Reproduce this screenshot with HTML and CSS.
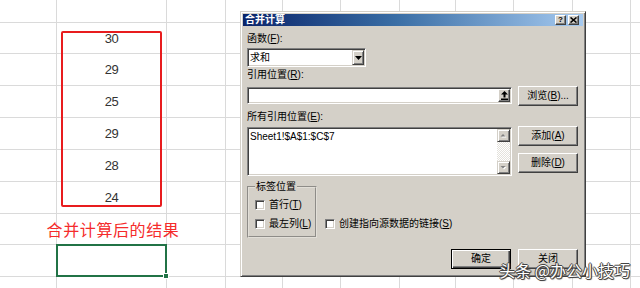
FILE: index.html
```html
<!DOCTYPE html>
<html lang="zh-CN">
<head>
<meta charset="utf-8">
<title>合并计算</title>
<link rel="stylesheet" href="styles.css">
</head>
<body>
<div class="sheet">
  <div></div><div></div><div></div><div></div><div></div><div></div><div></div><div></div><div></div><div></div><div></div>
  <div></div><div class="num">30</div><div></div><div></div><div></div><div></div><div></div><div></div><div></div><div></div><div></div>
  <div></div><div class="num">29</div><div></div><div></div><div></div><div></div><div></div><div></div><div></div><div></div><div></div>
  <div></div><div class="num">25</div><div></div><div></div><div></div><div></div><div></div><div></div><div></div><div></div><div></div>
  <div></div><div class="num">29</div><div></div><div></div><div></div><div></div><div></div><div></div><div></div><div></div><div></div>
  <div></div><div class="num">28</div><div></div><div></div><div></div><div></div><div></div><div></div><div></div><div></div><div></div>
  <div></div><div class="num">24</div><div></div><div></div><div></div><div></div><div></div><div></div><div></div><div></div><div></div>
  <div></div><div class="note">合并计算后的结果</div><div></div><div></div><div></div><div></div><div></div><div></div><div></div><div></div><div></div>
  <div></div><div class="sel"></div><div></div><div></div><div></div><div></div><div></div><div></div><div></div><div></div><div></div>
  <div></div><div></div><div></div><div></div><div></div><div></div><div></div><div></div><div></div><div></div><div></div>
</div>

<div class="redbox"></div>

<div class="dialog">
  <div class="title">
    <span>合并计算</span>
    <div class="tbtns">
      <span class="tb q">?</span>
      <span class="tb"><svg width="7" height="6" viewBox="0 0 7 6"><path d="M0.5 0.5 L6.5 5.5 M6.5 0.5 L0.5 5.5" stroke="#000" stroke-width="1.6"/></svg></span>
    </div>
  </div>
  <div class="body">
    <div class="lbl">函数(<u>F</u>):</div>
    <div class="combo sunk">
      <span>求和</span>
      <span class="ddbtn"><svg width="7" height="4" viewBox="0 0 7 4"><path d="M0 0 H7 L3.5 4 Z" fill="#000"/></svg></span>
    </div>
    <div class="lbl l2">引用位置(<u>R</u>):</div>
    <div class="row r1">
      <div class="input sunk">
        <span class="collapse"><svg width="7" height="9" viewBox="0 0 7 9"><path d="M3.5 0 L7 3.5 H4.5 V6.5 H2.5 V3.5 H0 Z" fill="#000"/><rect x="0" y="7.5" width="7" height="1.5" fill="#000"/></svg></span>
      </div>
      <button class="btn">浏览(<u>B</u>)...</button>
    </div>
    <div class="lbl l3">所有引用位置(<u>E</u>):</div>
    <div class="row r2">
      <div class="list sunk">
        <span class="ltext">Sheet1!$A$1:$C$7</span>
        <div class="sb">
          <span class="sbtn"><svg width="7" height="5" viewBox="0 0 7 5"><path d="M1.5 4.5 H6.5 L4 2 Z" fill="#fff"/><path d="M0.5 3.5 H5.5 L3 1 Z" fill="#808080"/></svg></span>
          <span class="track"></span>
          <span class="sbtn"><svg width="7" height="5" viewBox="0 0 7 5"><path d="M1.5 2 H6.5 L4 4.5 Z" fill="#fff"/><path d="M0.5 1 H5.5 L3 3.5 Z" fill="#808080"/></svg></span>
        </div>
      </div>
      <div class="btncol">
        <button class="btn">添加(<u>A</u>)</button>
        <button class="btn">删除(<u>D</u>)</button>
      </div>
    </div>
    <div class="row r3">
      <fieldset class="grp">
        <legend>标签位置</legend>
        <label class="chk"><span class="box sunk"></span>首行(<u>T</u>)</label>
        <label class="chk"><span class="box sunk"></span>最左列(<u>L</u>)</label>
      </fieldset>
      <label class="chk link"><span class="box sunk"></span>创建指向源数据的链接(<u>S</u>)</label>
    </div>
    <div class="row r4">
      <button class="btn def">确定</button>
      <button class="btn">关闭</button>
    </div>
  </div>
</div>

<div class="wm">头条 @办公小技巧</div>
</body>
</html>
```
FILE: styles.css
```css
html, body {
  margin: 0;
  padding: 0;
}
body {
  width: 640px;
  height: 288px;
  overflow: hidden;
  position: relative;
  background: #fff;
  font-family: "Liberation Sans", "Noto Sans CJK SC", sans-serif;
}

/* spreadsheet */
.sheet {
  display: grid;
  grid-template-columns: 56px 109px 58px 56px 57px 58px 55px 57px 58px 57px 9px;
  grid-template-rows: 22px 30px 31px 31px 31px 31px 31px 30px 31px 11px;
  gap: 1px;
  background: #dadada;
  width: 640px;
  height: 288px;
}
.sheet > div {
  background: #fff;
}
.num {
  display: flex;
  align-items: center;
  justify-content: center;
  font-size: 13px;
  letter-spacing: -0.6px;
  color: #333;
}
.note {
  display: flex;
  align-items: center;
  justify-content: center;
  white-space: nowrap;
  z-index: 1;
  color: #f52b2b;
  font-family: "Noto Sans CJK SC", sans-serif;
  font-size: 16px;
  letter-spacing: 0.6px;
  padding-left: 3px;
}
.sheet > .sel {
  position: relative;
  z-index: 1;
  outline: 2px solid #217346;
  outline-offset: -1px;
}
.sel::after {
  content: "";
  position: absolute;
  right: -3px;
  bottom: -3px;
  width: 4px;
  height: 4px;
  background: #217346;
  border: 1px solid #fff;
}
.redbox {
  position: absolute;
  left: 61px;
  top: 31px;
  width: 101px;
  height: 176px;
  box-sizing: border-box;
  border: 2px solid #e81c1e;
  border-radius: 2px;
}

/* dialog */
.dialog {
  position: absolute;
  left: 240px;
  top: 11px;
  width: 346px;
  box-sizing: border-box;
  background: #d4d0c8;
  border: 1px solid;
  border-color: #d4d0c8 #404040 #404040 #d4d0c8;
  box-shadow: inset 1px 1px #fff, inset -1px -1px #808080;
  padding: 2px;
  font-family: "Liberation Sans", "Noto Sans CJK SC", sans-serif;
  font-size: 10px;
  line-height: 12px;
  color: #000;
}
.title {
  height: 12px;
  background: linear-gradient(90deg, #0a246a 0%, #3a6ea5 45%, #a6caf0 100%);
  display: flex;
  align-items: center;
  justify-content: space-between;
  padding: 0 4px 0 2px;
  color: #fff;
  font-weight: bold;
  font-size: 10px;
  line-height: 12px;
}
.tbtns {
  display: flex;
  gap: 2px;
}
.tb {
  width: 11px;
  height: 10px;
  box-sizing: border-box;
  background: #d4d0c8;
  border: 1px solid;
  border-color: #fff #404040 #404040 #fff;
  box-shadow: inset -1px -1px #808080;
  display: flex;
  align-items: center;
  justify-content: center;
  color: #000;
  font-size: 8px;
  line-height: 8px;
  font-weight: bold;
}
.body {
  display: flex;
  flex-direction: column;
  padding: 7px 5px 5px 4px;
}
.lbl {
  height: 12px;
}
.l2 { margin-top: 2px; }
.l3 { margin-top: 5px; }
.sunk {
  background: #fff;
  box-sizing: border-box;
  border: 1px solid;
  border-color: #808080 #fff #fff #808080;
  box-shadow: inset 1px 1px #404040, inset -1px -1px #d4d0c8;
}
.combo {
  margin-top: 3px;
  width: 119px;
  height: 19px;
  display: flex;
  align-items: center;
  justify-content: space-between;
  padding: 1px 1px 1px 2px;
}
.ddbtn {
  width: 12px;
  height: 15px;
  box-sizing: border-box;
  background: #d4d0c8;
  border: 1px solid;
  border-color: #d4d0c8 #404040 #404040 #d4d0c8;
  box-shadow: inset 1px 1px #fff, inset -1px -1px #808080;
  display: flex;
  align-items: center;
  justify-content: center;
}
.row {
  display: flex;
  gap: 6px;
  align-items: flex-start;
}
.r1 { margin-top: 5px; }
.r2 { margin-top: 3px; }
.r3 { margin-top: 5px; gap: 8px; }
.r4 { margin-top: 11px; justify-content: flex-end; gap: 7px; }
.input {
  margin-top: 1px;
  width: 265px;
  height: 17px;
  display: flex;
  justify-content: flex-end;
  align-items: center;
  padding: 1px;
}
.collapse {
  width: 12px;
  height: 13px;
  box-sizing: border-box;
  background: #d4d0c8;
  border: 1px solid;
  border-color: #fff #404040 #404040 #fff;
  box-shadow: inset -1px -1px #808080;
  display: flex;
  align-items: center;
  justify-content: center;
}
.btn {
  width: 60px;
  height: 20px;
  box-sizing: border-box;
  margin: 0;
  padding: 0;
  background: #d4d0c8;
  border: 1px solid;
  border-color: #fff #404040 #404040 #fff;
  box-shadow: inset -1px -1px #808080;
  font-family: inherit;
  font-size: 10px;
  line-height: 12px;
  color: #000;
  display: flex;
  align-items: center;
  justify-content: center;
}
.btn.def {
  border-color: #000;
  box-shadow: inset 1px 1px #fff, inset -1px -1px #404040, inset -2px -2px #808080;
}
.list {
  margin-top: 1px;
  width: 265px;
  height: 49px;
  display: flex;
  padding: 1px;
}
.ltext {
  flex: 1;
  padding: 2px 1px;
  font-size: 10px;
  line-height: 12px;
}
.sb {
  width: 13px;
  display: flex;
  flex-direction: column;
}
.sbtn {
  width: 13px;
  height: 13px;
  box-sizing: border-box;
  background: #d4d0c8;
  border: 1px solid;
  border-color: #d4d0c8 #404040 #404040 #d4d0c8;
  box-shadow: inset 1px 1px #fff, inset -1px -1px #808080;
  display: flex;
  align-items: center;
  justify-content: center;
}
.track {
  flex: 1;
  background-color: #fff;
  background-image: repeating-conic-gradient(#fff 0 25%, #e4e2dc 0 50%);
  background-size: 2px 2px;
}
.btncol {
  display: flex;
  flex-direction: column;
  gap: 7px;
}
.grp {
  margin: 0;
  min-width: 0;
  width: 70px;
  box-sizing: border-box;
  padding: 6px 0 6px 6px;
  border: 2px groove #e2dfd8;
  display: flex;
  flex-direction: column;
  gap: 7px;
}
.grp legend {
  padding: 0 1px;
  margin-left: 0;
  font-size: 10px;
  line-height: 12px;
}
.chk {
  display: flex;
  align-items: center;
  height: 12px;
  white-space: nowrap;
}
.box {
  width: 10px;
  height: 10px;
  margin-right: 4px;
  flex: none;
}
.link {
  align-self: flex-end;
  margin-bottom: 8px;
}

/* watermark */
.wm {
  position: absolute;
  right: 10px;
  top: 259px;
  font-family: "Noto Sans CJK SC", sans-serif;
  font-size: 16px;
  line-height: 22px;
  color: #fff;
  white-space: nowrap;
  text-shadow: 1px 0 0 #444, -1px 0 0 #444, 0 1px 0 #444, 0 -1px 0 #444, 1px 1px 1px #444;
}
```
